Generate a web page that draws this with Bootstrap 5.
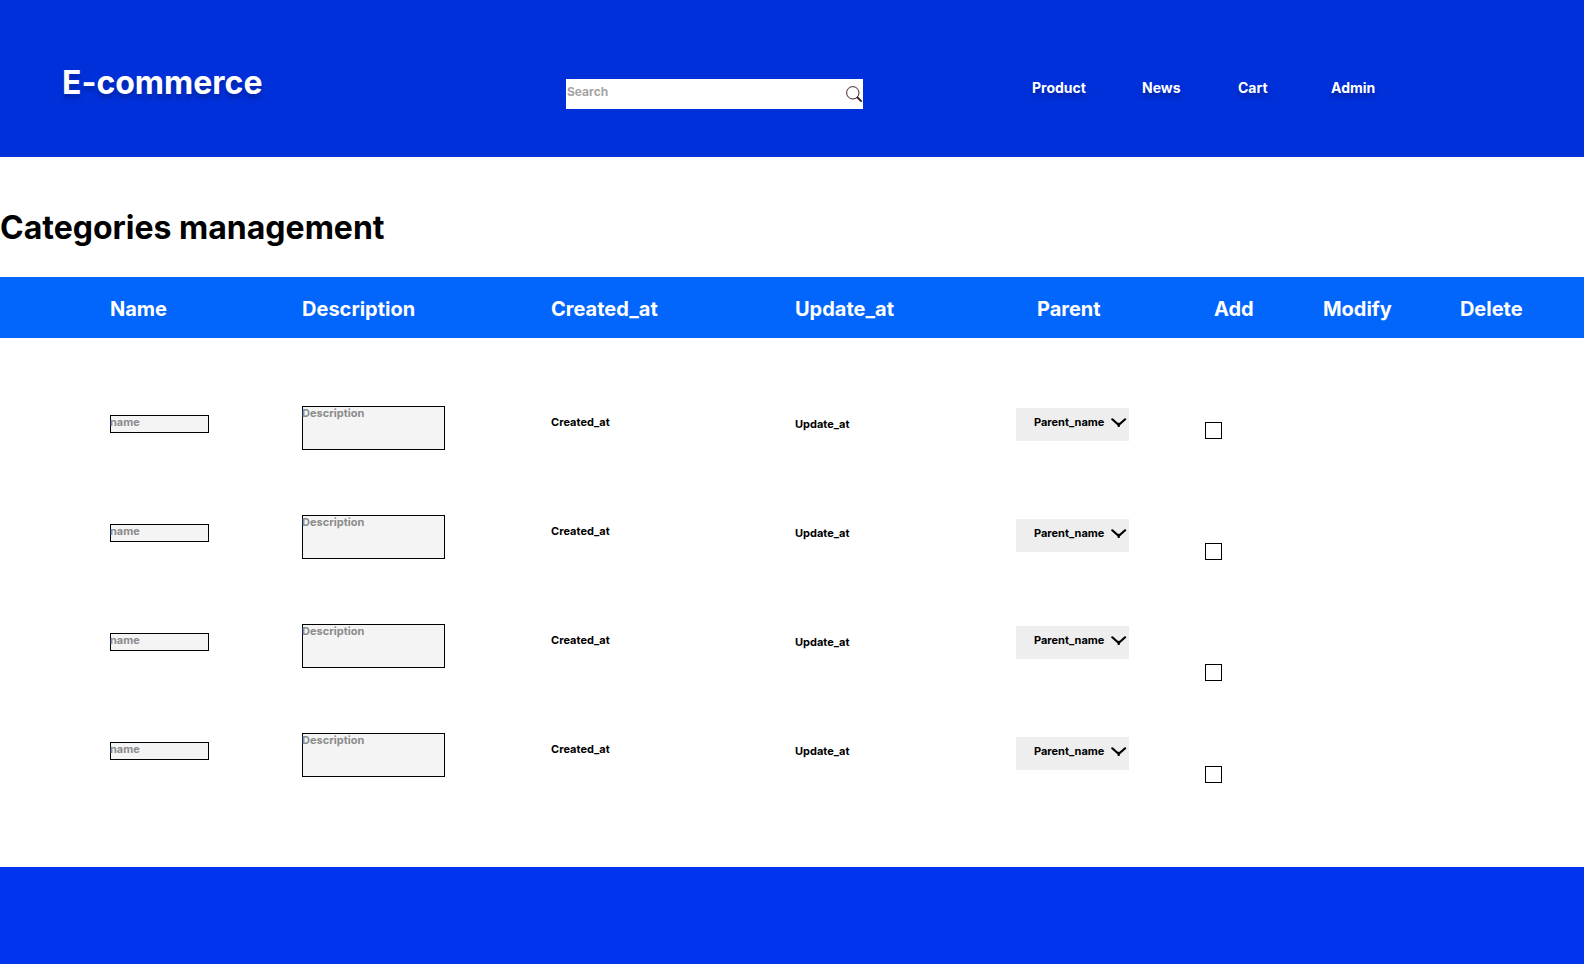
<!DOCTYPE html>
<html lang="en">
<head>
<meta charset="utf-8">
<meta name="viewport" content="width=device-width, initial-scale=1">
<title>Categories management</title>
<link href="https://cdn.jsdelivr.net/npm/bootstrap@5.3.0/dist/css/bootstrap.min.css" rel="stylesheet">
<style>
  body { font-family: Inter, "Liberation Sans", sans-serif; font-weight: 700; color: #000; background: #fff; }

  /* Header */
  .site-header { display: grid; grid-template-columns: 566fr 466fr 552fr; background: #0030da; min-height: 157px; }
  .brand { padding: 63px 0 0 62px; font-size: 32px; line-height: 40px; text-shadow: 0 4px 4px rgba(0, 0, 0, .25); }
  .search-box { width: 297px; height: 30px; margin-top: 79px; background: #fff; }
  .search-box input { padding: 0 0 4px 1px; font-size: 12px; line-height: 16px; font-weight: 700; }
  .search-box input::placeholder { color: #a5a5a5; opacity: 1; }
  .search-box button { width: 17px; }
  .site-nav { display: grid; grid-template-columns: 110px 96px 93px auto; justify-content: start; margin-top: 79px; font-size: 14px; line-height: 17px; text-shadow: 0 4px 4px rgba(0, 0, 0, .25); }

  .page-title { margin: 51px 0 30px; font-size: 32px; line-height: 39px; font-weight: 700; }

  /* Categories table */
  .cat-table { table-layout: fixed; }
  .cat-table th, .cat-table td { padding: 0; vertical-align: top; }
  .cat-table thead { background: #0366fc; color: #fff; }
  .cat-table thead th { height: 61px; padding-top: 2px; font-size: 20px; line-height: 24px; vertical-align: middle; white-space: nowrap; }
  .cat-table thead th:first-child, .cat-table tbody td:first-child { padding-left: 110px; }
  .cat-table .head-parent { padding-left: 21px; }
  .cat-table .head-add { padding-left: 9px; }
  .cat-table tbody::before { content: ""; display: block; height: 20px; }
  .cat-table tbody tr { height: 109px; }
  .cat-table tbody td { padding-top: 48px; font-size: 11px; line-height: 13px; }
  .cat-table tbody .cell-name { padding-top: 57px; }
  .cat-table tbody .cell-date { padding-top: 58px; }
  .cat-table tbody .cell-update { padding-top: 60px; }
  .cat-table tbody .cell-parent { padding-top: 50px; }
  .cat-table tbody tr:nth-child(even) .cell-parent { padding-top: 52px; }
  .cat-table tbody .tick-a { padding-top: 64px; }
  .cat-table tbody .tick-b { padding-top: 76px; }
  .cat-table tbody .tick-c { padding-top: 88px; }
  .cat-table tbody .tick-d { padding-top: 81px; }

  .field { display: block; border: 0; border-radius: 0; padding: 0; background: #f4f4f4; box-shadow: inset 0 0 0 1px #000; font-size: 11px; line-height: 13px; font-weight: 700; resize: none; }
  .field::placeholder { color: #8c8c8c; opacity: 1; }
  .field-name { width: 99px; height: 18px; padding-bottom: 4px; }
  .field-desc { width: 143px; height: 44px; padding-top: 1px; overflow: hidden; }
  .parent-pick { width: 113px; height: 33px; }
  .parent-pick select { appearance: none; border: 0; border-radius: 0; background: #eee; color: #000; padding: 0 18px 5px; font-size: 11px; line-height: 13px; font-weight: 700; }
  .parent-pick svg { top: 10px; right: 2px; pointer-events: none; }
  .tick { display: block; appearance: none; width: 17px; height: 17px; margin: 0; border: 1px solid #000; background: #fff; }
  .tick:checked { background: #000; box-shadow: inset 0 0 0 3px #fff; }

  .site-footer { background: #0034ee; height: 97px; }
</style>
</head>
<body class="d-flex flex-column min-vh-100">
<svg class="d-none" aria-hidden="true">
  <symbol id="chevron" viewBox="0 0 16 9"><path d="M1.300 1.300 7.700 7l6.400-5.700" fill="none" stroke="#000" stroke-width="2.200" stroke-linecap="round" stroke-linejoin="round"/><path d="M6.700 4.800h2V9h-2z"/></symbol>
</svg>

<header class="site-header text-white">
  <div class="brand"><a href="#" class="text-white text-decoration-none">E-commerce</a></div>
  <form class="search-box d-flex" role="search">
    <input type="search" class="border-0 bg-transparent flex-grow-1" placeholder="Search" aria-label="Search">
    <button type="button" class="border-0 bg-transparent p-0 d-flex align-items-center" aria-label="Search">
      <svg width="17" height="17" viewBox="0 0 17 17" fill="none" stroke="#3b2020"><circle cx="6.800" cy="6.800" r="6.200" stroke-width="1"/><path d="m11 11 4.700 4.600" stroke-width="2"/></svg>
    </button>
  </form>
  <nav class="site-nav">
    <a href="#" class="text-white text-decoration-none">Product</a>
    <a href="#" class="text-white text-decoration-none">News</a>
    <a href="#" class="text-white text-decoration-none">Cart</a>
    <a href="#" class="text-white text-decoration-none">Admin</a>
  </nav>
</header>

<main class="flex-grow-1">
  <h1 class="page-title">Categories management</h1>
  <table class="cat-table w-100">
    <colgroup>
      <col style="width:19.07%"><col style="width:15.72%"><col style="width:15.4%"><col style="width:13.95%"><col style="width:11.93%"><col style="width:7.45%"><col style="width:8.65%"><col>
    </colgroup>
    <thead>
      <tr><th scope="col">Name</th><th scope="col">Description</th><th scope="col">Created_at</th><th scope="col">Update_at</th><th scope="col" class="head-parent">Parent</th><th scope="col" class="head-add">Add</th><th scope="col">Modify</th><th scope="col">Delete</th></tr>
    </thead>
    <tbody>
      <tr>
        <td class="cell-name"><input type="text" class="field field-name" placeholder="name" aria-label="Name"></td>
        <td><textarea class="field field-desc" placeholder="Description" aria-label="Description"></textarea></td>
        <td class="cell-date">Created_at</td>
        <td class="cell-update">Update_at</td>
        <td class="cell-parent"><div class="parent-pick position-relative"><select class="w-100 h-100" aria-label="Parent"><option>Parent_name</option></select><svg class="position-absolute" width="16" height="9"><use href="#chevron"/></svg></div></td>
        <td class="tick-a"><input type="checkbox" class="tick" aria-label="Add"></td>
        <td></td><td></td>
      </tr>
      <tr>
        <td class="cell-name"><input type="text" class="field field-name" placeholder="name" aria-label="Name"></td>
        <td><textarea class="field field-desc" placeholder="Description" aria-label="Description"></textarea></td>
        <td class="cell-date">Created_at</td>
        <td class="cell-update">Update_at</td>
        <td class="cell-parent"><div class="parent-pick position-relative"><select class="w-100 h-100" aria-label="Parent"><option>Parent_name</option></select><svg class="position-absolute" width="16" height="9"><use href="#chevron"/></svg></div></td>
        <td class="tick-b"><input type="checkbox" class="tick" aria-label="Add"></td>
        <td></td><td></td>
      </tr>
      <tr>
        <td class="cell-name"><input type="text" class="field field-name" placeholder="name" aria-label="Name"></td>
        <td><textarea class="field field-desc" placeholder="Description" aria-label="Description"></textarea></td>
        <td class="cell-date">Created_at</td>
        <td class="cell-update">Update_at</td>
        <td class="cell-parent"><div class="parent-pick position-relative"><select class="w-100 h-100" aria-label="Parent"><option>Parent_name</option></select><svg class="position-absolute" width="16" height="9"><use href="#chevron"/></svg></div></td>
        <td class="tick-c"><input type="checkbox" class="tick" aria-label="Add"></td>
        <td></td><td></td>
      </tr>
      <tr>
        <td class="cell-name"><input type="text" class="field field-name" placeholder="name" aria-label="Name"></td>
        <td><textarea class="field field-desc" placeholder="Description" aria-label="Description"></textarea></td>
        <td class="cell-date">Created_at</td>
        <td class="cell-update">Update_at</td>
        <td class="cell-parent"><div class="parent-pick position-relative"><select class="w-100 h-100" aria-label="Parent"><option>Parent_name</option></select><svg class="position-absolute" width="16" height="9"><use href="#chevron"/></svg></div></td>
        <td class="tick-d"><input type="checkbox" class="tick" aria-label="Add"></td>
        <td></td><td></td>
      </tr>
    </tbody>
  </table>
</main>

<footer class="site-footer"></footer>
<script src="https://cdn.jsdelivr.net/npm/bootstrap@5.3.0/dist/js/bootstrap.bundle.min.js"></script>
</body>
</html>
